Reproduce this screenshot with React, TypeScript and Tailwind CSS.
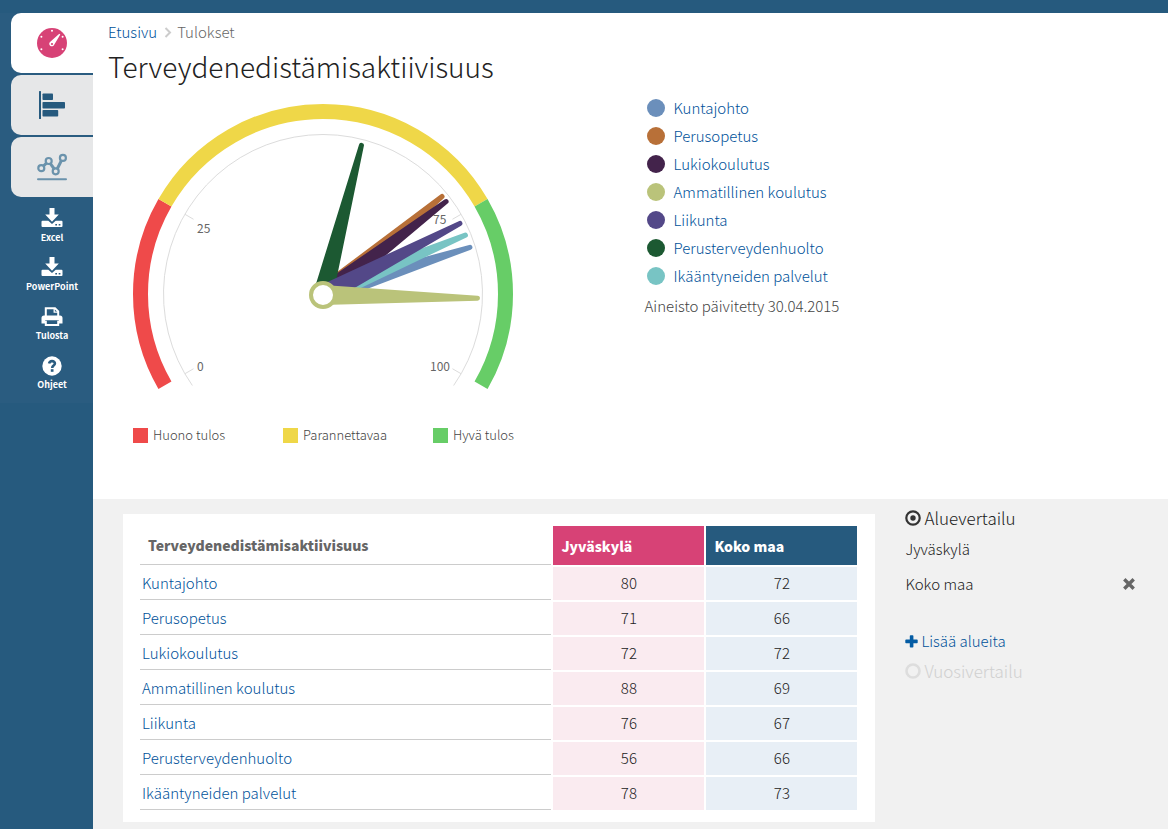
import React from "react";

type Area = { name: string; color: string; local: number; national: number };

const AREAS: Area[] = [
  { name: "Kuntajohto", color: "#6b8fbb", local: 80, national: 72 },
  { name: "Perusopetus", color: "#b87038", local: 71, national: 66 },
  { name: "Lukiokoulutus", color: "#43234b", local: 72, national: 72 },
  { name: "Ammatillinen koulutus", color: "#bac37a", local: 88, national: 69 },
  { name: "Liikunta", color: "#534888", local: 76, national: 67 },
  { name: "Perusterveydenhuolto", color: "#1c5932", local: 56, national: 66 },
  { name: "Ikääntyneiden palvelut", color: "#78c4c4", local: 78, national: 73 },
];

// Painting order of the needles, back to front.
const NEEDLE_ORDER = [0, 1, 2, 6, 5, 4, 3];

const BANDS = [
  { label: "Huono tulos", color: "#ef4a4a", from: -120, to: -60 },
  { label: "Parannettavaa", color: "#efd748", from: -60, to: 60 },
  { label: "Hyvä tulos", color: "#67cd67", from: 60, to: 120 },
];

const CX = 200;
const CY = 200;

function polar(radius: number, degrees: number) {
  const a = (degrees * Math.PI) / 180;
  return `${(CX + radius * Math.sin(a)).toFixed(2)} ${(CY - radius * Math.cos(a)).toFixed(2)}`;
}

function arc(radius: number, from: number, to: number) {
  const large = to - from > 180 ? 1 : 0;
  return `M${polar(radius, from)}A${radius} ${radius} 0 ${large} 1 ${polar(radius, to)}`;
}

function Gauge() {
  return (
    <svg viewBox="0 0 400 300" className="block h-[300px] w-[400px]" role="img" aria-label="Terveydenedistämisaktiivisuus">
      {BANDS.map((b) => (
        <path key={b.label} d={arc(182.5, b.from, b.to)} fill="none" stroke={b.color} strokeWidth="15" />
      ))}
      <path d={arc(159.5, -125, 125)} fill="none" stroke="#dcdcdc" />
      {[-120, -60, 60, 120].map((a) => (
        <path key={a} d={`M${polar(159.5, a)}L${polar(149.5, a)}`} stroke="#dcdcdc" />
      ))}
      {NEEDLE_ORDER.map((i) => (
        <path
          key={i}
          transform={`translate(200 201) rotate(${-120 + AREAS[i].local * 2.4})`}
          fill={AREAS[i].color}
          d="M-10 0L-2.5 -154.5A2.5 2.5 0 0 1 2.5 -154.5L10 0Z"
        />
      ))}
      <circle cx="200" cy="201" r="12" fill="#fff" stroke="#bac37a" strokeWidth="4" />
      <g fill="#666" fontSize="12" className="font-normal">
        <text x="74" y="139">25</text>
        <text x="310" y="130">75</text>
        <text x="74" y="277">0</text>
        <text x="307" y="277">100</text>
      </g>
    </svg>
  );
}

function GaugeIcon() {
  return (
    <svg viewBox="0 0 30 30" className="size-[30px]" aria-hidden="true">
      <circle cx="15" cy="15" r="15" fill="#d74276" />
      <g fill="#fff">
        <circle cx="15" cy="2.7" r="1" />
        <circle cx="4.4" cy="8.8" r="1" />
        <circle cx="4.4" cy="21.2" r="1" />
        <circle cx="25.6" cy="8.8" r="1" />
        <circle cx="25.6" cy="21.2" r="1" />
        <path d="M22.3 5.8L23.3 6.5L17.2 16.8A2.6 2.6 0 1 1 13 13.9Z" />
      </g>
      <circle cx="15" cy="16" r="1.1" fill="#d74276" />
    </svg>
  );
}

function BarsIcon() {
  return (
    <svg viewBox="0 0 30 30" className="size-[30px]" fill="#265a7e" aria-hidden="true">
      <rect x="2" y="1" width="2" height="28" rx="0.5" />
      <rect x="5.5" y="3.5" width="10.5" height="6.5" rx="0.8" />
      <rect x="5.5" y="12" width="22.5" height="6.5" rx="0.8" />
      <rect x="5.5" y="20" width="15.7" height="6.5" rx="0.8" />
    </svg>
  );
}

function TrendIcon() {
  return (
    <svg viewBox="0 0 30 30" className="size-[30px]" fill="none" stroke="#6b93ac" aria-hidden="true">
      <path d="M6.3 14.2L9.6 11M13.2 11.4L17.3 17M20.2 17L24.6 8.2" strokeWidth="3" />
      <g strokeWidth="2.2">
        <circle cx="4.3" cy="16.2" r="3" />
        <circle cx="11.7" cy="9" r="3" />
        <circle cx="18.7" cy="19.3" r="3" />
        <circle cx="25.9" cy="5.9" r="3" />
      </g>
      <path d="M1 27.2H29" strokeWidth="2" strokeLinecap="round" />
    </svg>
  );
}

function DownloadIcon() {
  return (
    <svg viewBox="0 0 22 20" className="h-[20px] w-[22px]" fill="#fff" aria-hidden="true">
      <path d="M8.5 0H13.5V6.5H17.8L11 13.7L4.2 6.5H8.5Z" />
      <path
        fillRule="evenodd"
        d="M1.5 12.7H7.3L11 16L14.7 12.7H20.5Q21.5 12.7 21.5 13.7V18Q21.5 19 20.5 19H1.5Q0.5 19 0.5 18V13.7Q0.5 12.7 1.5 12.7ZM14.3 16V17.5H16V16ZM17.7 16V17.5H19.4V16Z"
      />
    </svg>
  );
}

function PrintIcon() {
  return (
    <svg viewBox="0 0 22 20" className="h-[20px] w-[22px]" aria-hidden="true">
      <path d="M4.8 11V2.2H14L17.2 5.4V11" fill="none" stroke="#fff" strokeWidth="2" />
      <path d="M13.2 2V6.2H17.5" fill="none" stroke="#fff" strokeWidth="1.3" />
      <path d="M3 9.5H19Q21.5 9.5 21.5 12V17.5H17.8V14.3H4.2V17.5H0.5V12Q0.5 9.5 3 9.5Z" fill="#fff" />
      <path d="M4.8 14.8V19H17.2V14.8" fill="none" stroke="#fff" strokeWidth="2" />
    </svg>
  );
}

function HelpIcon() {
  return (
    <svg viewBox="0 -1 22 20" className="h-[20px] w-[22px] overflow-visible" aria-hidden="true">
      <circle cx="11" cy="10" r="9.7" fill="#fff" />
      <path d="M8.1 7.6C8.5 5.7 9.6 5.1 11 5.1C12.7 5.1 13.9 6 13.9 7.5C13.9 9.6 11.2 9.5 11.2 11.9" fill="none" stroke="#2a5c80" strokeWidth="2.6" />
      <rect x="9.8" y="13.2" width="2.7" height="2.6" fill="#2a5c80" />
    </svg>
  );
}

const TOOLS = [
  { label: "Excel", icon: <DownloadIcon /> },
  { label: "PowerPoint", icon: <DownloadIcon /> },
  { label: "Tulosta", icon: <PrintIcon /> },
  { label: "Ohjeet", icon: <HelpIcon /> },
];

function Sidebar() {
  const tab = "flex h-[60px] items-center justify-center rounded-l-[10px]";
  return (
    <aside className="w-[93px] shrink-0">
      <div className="bg-[#2a5c80] pb-2">
        <nav className="flex flex-col gap-0.5 pl-[11px]">
          <a href="#mittari" aria-label="Mittari" className={`${tab} bg-white`}><GaugeIcon /></a>
          <a href="#palkit" aria-label="Palkit" className={`${tab} bg-[#e6e7e8]`}><BarsIcon /></a>
          <a href="#kehitys" aria-label="Kehitys" className={`${tab} bg-[#e6e7e8]`}><TrendIcon /></a>
        </nav>
        <div className="mt-[11px] flex flex-col gap-[9px] pl-[11px]">
          {TOOLS.map((t) => (
            <button key={t.label} type="button" className="flex h-10 flex-col items-center text-[9px] leading-[20px] font-bold text-white">
              {t.icon}
              {t.label}
            </button>
          ))}
        </div>
      </div>
    </aside>
  );
}

function ResultTable() {
  return (
    <table className="w-full table-fixed border-separate border-spacing-[2px]">
      <colgroup>
        <col />
        <col className="w-[151px]" />
        <col className="w-[151px]" />
      </colgroup>
      <thead>
        <tr className="h-[39px] text-left text-sm leading-5">
          <th className="border-b border-[#ccc] px-2 font-black text-[#666]">Terveydenedistämisaktiivisuus</th>
          <th className="bg-[#d74276] px-2 font-black text-white">Jyväskylä</th>
          <th className="bg-[#265a7e] px-2 font-black text-white">Koko maa</th>
        </tr>
      </thead>
      <tbody>
        {AREAS.map((a) => (
          <tr key={a.name} className="h-[33px] text-center leading-5 text-[#222]">
            <td className="border-b border-[#ccc] px-0.5 text-left">
              <a href="#alue" className="text-[#00529a]">{a.name}</a>
            </td>
            <td className="bg-[#faebf0] pb-0.5">{a.local}</td>
            <td className="bg-[#e8eff6] pb-0.5">{a.national}</td>
          </tr>
        ))}
      </tbody>
    </table>
  );
}

function Comparison() {
  return (
    <section className="flex-1 px-[30px] pt-2">
      <h2 className="flex items-center gap-[3px] text-[17px] leading-[22px] text-[#222]">
        <svg viewBox="0 0 16 16" className="size-4" aria-hidden="true">
          <circle cx="8" cy="8" r="6.7" fill="none" stroke="#333" strokeWidth="2.2" />
          <circle cx="8" cy="8" r="2.7" fill="#333" />
        </svg>
        Aluevertailu
      </h2>
      <ul className="text-[#222]">
        <li className="mt-[10px] leading-5">Jyväskylä</li>
        <li className="mt-[15px] flex items-center justify-between leading-5">
          Koko maa
          <button type="button" aria-label="Poista Koko maa" className="px-[3px]">
            <svg viewBox="0 0 12 12" className="size-3" aria-hidden="true">
              <path d="M2.5 2.5L9.5 9.5M9.5 2.5L2.5 9.5" stroke="#666" strokeWidth="3.4" strokeLinecap="square" />
            </svg>
          </button>
        </li>
      </ul>
      <button type="button" className="mt-9 flex items-center gap-[3px] leading-[22px] text-[#00529a]">
        <svg viewBox="0 0 13 13" className="size-[13px]" fill="#045ca4" aria-hidden="true">
          <rect x="4.8" y="0.3" width="3.6" height="12.2" rx="0.8" />
          <rect x="0.3" y="4.6" width="12.4" height="3.6" rx="0.8" />
        </svg>
        Lisää alueita
      </button>
      <h2 className="mt-2 flex items-center gap-[3px] text-[17px] leading-[22px] text-[#d0d0d0]">
        <svg viewBox="0 0 16 16" className="size-4" aria-hidden="true">
          <circle cx="8" cy="8" r="6.5" fill="none" stroke="#ddd" strokeWidth="2.6" />
        </svg>
        Vuosivertailu
      </h2>
    </section>
  );
}

export default function App() {
  return (
    <div className="flex min-h-screen bg-[#265a7e] pt-[13px] font-['Noto_Sans_CJK_SC','Noto_Sans',sans-serif] text-[15px] font-light text-[#333]">
      <Sidebar />
      <main className="flex min-w-0 flex-1 flex-col bg-white">
        <header className="px-[15px] pt-[9px]">
          <nav className="flex items-center leading-5">
            <a href="#etusivu" className="text-[#00529a]">Etusivu</a>
            <svg viewBox="0 0 20 20" className="size-5" fill="none" stroke="#ccc" strokeWidth="2" aria-hidden="true">
              <path d="M8.5 6L13 10.5L8.5 15" />
            </svg>
            <span className="text-[#666]">Tulokset</span>
          </nav>
          <h1 className="mt-1.5 text-[28px] leading-9 text-[#222]">Terveydenedistämisaktiivisuus</h1>
        </header>
        <div className="grid grid-cols-2 pt-[10px] pb-[54px]">
          <div className="pl-[30px]">
            <Gauge />
            <ul className="mt-[31px] flex pl-[10px] text-[13px] leading-5 text-[#444]">
              {BANDS.map((b) => (
                <li key={b.label} className="flex w-[150px] items-center gap-[5px]">
                  <span className="size-[15px]" style={{ backgroundColor: b.color }} />
                  {b.label}
                </li>
              ))}
            </ul>
          </div>
          <div className="px-[14px]">
            <ul>
              {AREAS.map((a) => (
                <li key={a.name} className="flex h-7 items-center gap-[9px] pl-0.5">
                  <span className="size-[18px] rounded-full" style={{ backgroundColor: a.color }} />
                  <a href="#alue" className="text-[#00529a]">{a.name}</a>
                </li>
              ))}
            </ul>
            <p className="mt-[6px] leading-5 text-[#444]">Aineisto päivitetty 30.04.2015</p>
          </div>
        </div>
        <div className="flex flex-1 items-start bg-[#f1f1f1] pb-[7px] pl-[30px]">
          <div className="mt-[15px] w-[72%] bg-white py-[10px] pr-4 pl-[15px]">
            <ResultTable />
          </div>
          <Comparison />
        </div>
      </main>
    </div>
  );
}
